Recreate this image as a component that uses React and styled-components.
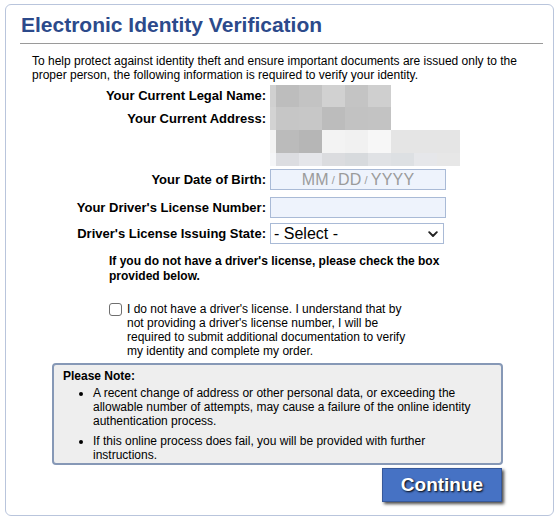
import styled, { createGlobalStyle } from "styled-components";

const GlobalStyle = createGlobalStyle`
  body {
    margin: 0;
    background: #fff;
    font-family: "Liberation Sans", Arial, Helvetica, sans-serif;
    color: #000;
  }
`;

// blurred personal data, one row of cells per line
const nameRows = [
  {
    h: 22,
    cells: [
      [6, "#d0d0d0"],
      [23, "#bdbdbd"],
      [23, "#c3c3c3"],
      [23, "#d1d1d1"],
      [23, "#c4c4c4"],
      [23, "#cfcfcf"],
    ],
  },
];

const addressRows = [
  {
    h: 23,
    cells: [
      [6, "#d3d3d3"],
      [23, "#c6c6c6"],
      [23, "#c7c7c7"],
      [23, "#bcbcbc"],
      [23, "#c2c2c2"],
      [23, "#c3c3c3"],
    ],
  },
  {
    h: 23,
    cells: [
      [6, "#f3f3f3"],
      [23, "#bbbbbb"],
      [23, "#b6b6b6"],
      [23, "#f3f3f3"],
      [23, "#f1f1f1"],
      [23, "#f7f7f7"],
      [69, "#e5e5e5"],
    ],
  },
  {
    h: 13,
    cells: [
      [6, "#f5f6f8"],
      [23, "#dcdde1"],
      [23, "#e5e6ea"],
      [23, "#dbdcdf"],
      [23, "#d7dadd"],
      [23, "#e0e2e5"],
      [23, "#dde0e3"],
      [23, "#e6e7ea"],
      [23, "#e7e7e7"],
    ],
  },
];

const Blurred = ({ rows }) => (
  <BlurBox>
    {rows.map((row, i) => (
      <BlurRow key={i} $h={row.h}>
        {row.cells.map(([w, c], j) => (
          <BlurCell key={j} style={{ width: w, background: c }} />
        ))}
      </BlurRow>
    ))}
  </BlurBox>
);

const App = () => {
  return (
    <>
      <GlobalStyle />
      <Card>
        <Title>Electronic Identity Verification</Title>
        <Rule />
        <Intro>
          To help protect against identity theft and ensure important documents
          are issued only to the proper person, the following information is
          required to verify your identity.
        </Intro>

        <Row $mt={3}>
          <Label $lh={22}>Your Current Legal Name:</Label>
          <Blurred rows={nameRows} />
        </Row>
        <Row>
          <Label $lh={23} $top>
            Your Current Address:
          </Label>
          <Blurred rows={addressRows} />
        </Row>
        <Row $mt={3}>
          <Label>Your Date of Birth:</Label>
          <DateField>
            MM<Slash>/</Slash>DD<Slash>/</Slash>YYYY
          </DateField>
        </Row>
        <Row $mt={7}>
          <Label>Your Driver's License Number:</Label>
          <TextField type="text" />
        </Row>
        <Row $mt={5}>
          <Label>Driver's License Issuing State:</Label>
          <SelectWrap>
            <Select defaultValue="">
              <option value="">- Select -</option>
            </Select>
            <Chevron width="10" height="7" viewBox="0 0 10 7">
              <path
                d="M1.2 1.2 L5 5 L8.8 1.2"
                fill="none"
                stroke="#222"
                strokeWidth="1.9"
                strokeLinecap="round"
                strokeLinejoin="round"
              />
            </Chevron>
          </SelectWrap>
        </Row>

        <Instruction>
          If you do not have a driver's license, please check the box provided
          below.
        </Instruction>

        <CheckRow>
          <CheckBox />
          <CheckText>
            I do not have a driver's license. I understand that by not providing
            a driver's license number, I will be required to submit additional
            documentation to verify my identity and complete my order.
          </CheckText>
        </CheckRow>

        <Bottom>
          <Note>
            <NoteTitle>Please Note:</NoteTitle>
            <NoteList>
              <li>
                A recent change of address or other personal data, or exceeding
                the allowable number of attempts, may cause a failure of the
                online identity authentication process.
              </li>
              <li>
                If this online process does fail, you will be provided with
                further instructions.
              </li>
            </NoteList>
          </Note>
          <Actions>
            <ContinueButton>Continue</ContinueButton>
          </Actions>
        </Bottom>
      </Card>
    </>
  );
};

const Card = styled.div`
  box-sizing: border-box;
  width: 549px;
  margin: 4px 0 0 5px;
  padding: 7px 10px 13px 14px;
  border: 1px solid #b9c5dc;
  border-radius: 6px;
  background: #fff;
`;

const Title = styled.h1`
  margin: 0;
  padding-left: 1px;
  font-size: 21px;
  line-height: 26px;
  font-weight: bold;
  color: #2c4a8b;
`;

const Rule = styled.div`
  height: 1px;
  margin-top: 5px;
  background: #9a9a9a;
`;

const Intro = styled.p`
  margin: 10px 0 0;
  padding-left: 12px;
  font-size: 12px;
  line-height: 14px;
`;

const Row = styled.div`
  display: flex;
  align-items: center;
  gap: 4px;
  margin-top: ${(p) => p.$mt || 0}px;
`;

const Label = styled.div`
  width: 246px;
  flex: none;
  align-self: ${(p) => (p.$top ? "flex-start" : "center")};
  text-align: right;
  font-size: 13px;
  font-weight: bold;
  line-height: ${(p) => (p.$lh ? `${p.$lh}px` : "15px")};
`;

const BlurBox = styled.div`
  display: flex;
  flex-direction: column;
`;

const BlurRow = styled.div`
  display: flex;
  height: ${(p) => p.$h}px;
`;

const BlurCell = styled.div`
  height: 100%;
  flex: none;
`;

const fieldBox = `
  box-sizing: border-box;
  width: 176px;
  height: 21px;
  border: 1px solid #a9bad6;
  background: #eef3fc;
`;

const DateField = styled.div`
  ${fieldBox}
  display: flex;
  align-items: center;
  justify-content: center;
  font-size: 16px;
  color: #9b9b9b;
  letter-spacing: 0.2px;
`;

const Slash = styled.span`
  font-size: 11px;
  margin: 0 3px;
`;

const TextField = styled.input`
  ${fieldBox}
  margin: 0;
  padding: 0 4px;
  outline: none;
`;

const SelectWrap = styled.div`
  position: relative;
  width: 174px;
  height: 21px;
`;

const Select = styled.select`
  appearance: none;
  box-sizing: border-box;
  width: 100%;
  height: 100%;
  margin: 0;
  padding: 0 0 0 3px;
  border: 1px solid #a9bad6;
  border-radius: 0;
  background: #fff;
  font-family: "Liberation Sans", Arial, sans-serif;
  font-size: 16px;
  color: #000;
`;

const Chevron = styled.svg`
  position: absolute;
  right: 6px;
  top: 8px;
  pointer-events: none;
`;

const Instruction = styled.p`
  width: 345px;
  margin: 10px 0 0 89px;
  font-size: 12px;
  font-weight: bold;
  line-height: 15px;
`;

const CheckRow = styled.label`
  display: flex;
  align-items: flex-start;
  gap: 5px;
  margin: 18px 0 0 89px;
`;

const CheckBox = styled.span`
  box-sizing: border-box;
  flex: none;
  width: 13px;
  height: 13px;
  margin-top: 1px;
  border: 1px solid #6f6f6f;
  border-radius: 3px;
  background: #fff;
`;

const CheckText = styled.span`
  width: 282px;
  font-size: 12px;
  line-height: 14px;
`;

const Bottom = styled.div`
  width: 451px;
  margin: 5px 0 0 32px;
`;

const Note = styled.div`
  box-sizing: border-box;
  height: 102px;
  padding: 4px 20px 0 9px;
  border: 2px solid #8698b6;
  border-radius: 4px;
  background: #eeeeee;
  font-size: 12px;
  line-height: 14px;
`;

const NoteTitle = styled.div`
  font-weight: bold;
`;

const NoteList = styled.ul`
  margin: 3px 0 0;
  padding-left: 30px;

  li + li {
    margin-top: 6px;
  }
`;

const Actions = styled.div`
  display: flex;
  justify-content: flex-end;
  margin-top: 3px;
  padding-right: 1px;
`;

const ContinueButton = styled.button`
  box-sizing: border-box;
  width: 120px;
  height: 34px;
  margin: 0;
  padding: 0;
  border: 1px solid #36589a;
  background: #4672c4;
  box-shadow: 2px 2px 3px #4a4a4a;
  color: #fff;
  font-family: "Liberation Sans", Arial, sans-serif;
  font-size: 19px;
  font-weight: bold;
  text-shadow: 1px 1px 2px #000;
  cursor: pointer;
`;

export default App;
